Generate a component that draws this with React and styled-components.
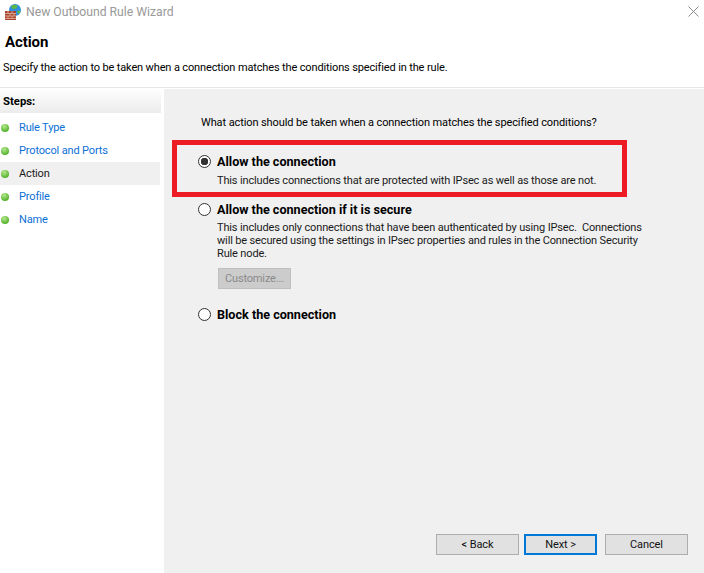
import React from 'react';
import styled, { createGlobalStyle } from 'styled-components';

const GlobalStyle = createGlobalStyle`
  html, body {
    margin: 0;
    padding: 0;
    background: #fff;
  }
  body {
    font-family: Roboto, "Open Sans", sans-serif;
    font-size: 11px;
    letter-spacing: -0.1px;
    color: #000;
  }
`;

const STEPS = [
  { label: 'Rule Type' },
  { label: 'Protocol and Ports' },
  { label: 'Action', current: true },
  { label: 'Profile' },
  { label: 'Name' },
];

function WizardIcon() {
  return (
    <svg width="16" height="18" viewBox="0 0 16 18">
      <circle cx="10" cy="7" r="6" fill="#2f8fe0" />
      <path d="M6.500 3c2-1.800 4.500-1.500 5.500-.5 1 2-1 3.500-3 3.500S5.500 5 6.500 3z" fill="#5cb848" />
      <path d="M12 8c2-.5 3.500 0 3.800 1L13 11z" fill="#5cb848" />
      <rect x="0" y="8" width="11" height="9" fill="#a8452f" />
      <path d="M0 10.500h11M0 13h11M0 15.500h11M3 8v2.500M7 8v2.500M5 10.500V13M9 10.500V13M3 13v2.500M7 13v2.500" stroke="#e3b7a5" strokeWidth="0.8" fill="none" />
    </svg>
  );
}

function CloseIcon() {
  return (
    <svg width="11" height="11" viewBox="0 0 11 11">
      <path d="M0.500 0.500l10 10M10.500 0.500l-10 10" stroke="#8a8a8a" strokeWidth="1" fill="none" />
    </svg>
  );
}

function RadioOption({ checked, title, tight, children }) {
  return (
    <Option>
      <RadioCircle $checked={checked} />
      <OptionBody>
        <OptionTitle>{title}</OptionTitle>
        {children && <OptionText $tight={tight}>{children}</OptionText>}
      </OptionBody>
    </Option>
  );
}

export default function App() {
  return (
    <Window>
      <GlobalStyle />
      <TitleBar>
        <WizardIcon />
        <TitleText>New Outbound Rule Wizard</TitleText>
        <CloseButton>
          <CloseIcon />
        </CloseButton>
      </TitleBar>
      <Header>
        <HeaderTitle>Action</HeaderTitle>
        <HeaderText>Specify the action to be taken when a connection matches the conditions specified in the rule.</HeaderText>
      </Header>
      <Body>
        <Sidebar>
          <StepsHeading>Steps:</StepsHeading>
          <StepList>
            {STEPS.map((step) => (
              <StepRow key={step.label} $current={step.current}>
                <StepDot />
                <StepLabel $current={step.current}>{step.label}</StepLabel>
              </StepRow>
            ))}
          </StepList>
        </Sidebar>
        <Main>
          <Question>What action should be taken when a connection matches the specified conditions?</Question>
          <Options>
            <RadioOption checked title="Allow the connection">
              This includes connections that are protected with IPsec as well as those are not.
            </RadioOption>
            <RadioOption tight title="Allow the connection if it is secure">
              This includes only connections that have been authenticated by using IPsec.&nbsp; Connections
              <br />
              will be secured using the settings in IPsec properties and rules in the Connection Security
              <br />
              Rule node.
              <CustomizeButton>Customize...</CustomizeButton>
            </RadioOption>
            <RadioOption title="Block the connection" />
          </Options>
          <Highlight />
          <Footer>
            <WizardButton>&lt; Back</WizardButton>
            <NextButton>Next &gt;</NextButton>
            <CancelButton>Cancel</CancelButton>
          </Footer>
        </Main>
      </Body>
    </Window>
  );
}

const Window = styled.div`
  width: 704px;
  height: 573px;
  display: flex;
  flex-direction: column;
  overflow: hidden;
  background: #fff;
`;

const TitleBar = styled.div`
  height: 24px;
  padding: 0 5px 0 5px;
  display: flex;
  align-items: center;
  gap: 5px;
  flex-shrink: 0;
`;

const TitleText = styled.div`
  color: #999;
  font-size: 12.2px;
  letter-spacing: 0;
`;

const CloseButton = styled.div`
  margin-left: auto;
  margin-bottom: 2px;
  display: flex;
`;

const Header = styled.div`
  height: 64px;
  padding: 10px 0 0 5px;
  box-sizing: border-box;
  flex-shrink: 0;
  border-bottom: 1px solid #e6e6e6;
`;

const HeaderTitle = styled.div`
  font-size: 15px;
  font-weight: 700;
  line-height: 16px;
`;

const HeaderText = styled.div`
  margin: 10px 0 0 -2px;
  line-height: 16px;
  letter-spacing: -0.14px;
`;

const Body = styled.div`
  flex: 1;
  display: flex;
  padding-top: 1px;
  min-height: 0;
`;

const Sidebar = styled.div`
  width: 161px;
  margin-right: 3px;
  padding-top: 1px;
  flex-shrink: 0;
`;

const StepsHeading = styled.div`
  height: 23px;
  line-height: 24px;
  padding-left: 3px;
  font-weight: 700;
  font-size: 11.3px;
  letter-spacing: 0;
  background: linear-gradient(#fdfdfd, #ececec);
`;

const StepList = styled.div`
  display: flex;
  flex-direction: column;
  padding-top: 3px;
`;

const StepRow = styled.div`
  height: 23px;
  width: 160px;
  display: flex;
  align-items: center;
  background: ${(p) => (p.$current ? '#f0f0f0' : 'transparent')};
`;

const StepDot = styled.span`
  width: 8px;
  height: 8px;
  margin-left: 1px;
  border-radius: 50%;
  background: radial-gradient(circle at 40% 30%, #b5e88f, #57b52f 70%);
`;

const StepLabel = styled.span`
  margin-left: 10px;
  letter-spacing: -0.15px;
  color: ${(p) => (p.$current ? '#1a1a1a' : '#0a6fd6')};
`;

const Main = styled.div`
  position: relative;
  flex: 1;
  background: #f0f0f0;
  padding: 26px 0 0 37px;
  display: flex;
  flex-direction: column;
  min-width: 0;
`;

const Question = styled.div`
  line-height: 16px;
`;

const Options = styled.div`
  margin-top: 23px;
  display: flex;
  flex-direction: column;
  gap: 15px;
`;

const Option = styled.div`
  display: flex;
  align-items: flex-start;
  gap: 6px;
  margin-left: -3px;
`;

const RadioCircle = styled.span`
  box-sizing: border-box;
  width: 13px;
  height: 13px;
  margin-top: 1px;
  border: 1px solid #333;
  border-radius: 50%;
  background: ${(p) => (p.$checked ? 'radial-gradient(circle, #333 0 3.5px, #fff 4px)' : '#fff')};
  flex-shrink: 0;
`;

const OptionBody = styled.div`
  display: flex;
  flex-direction: column;
`;

const OptionTitle = styled.div`
  font-weight: 700;
  font-size: 12.6px;
  letter-spacing: 0;
  line-height: 16px;
`;

const OptionText = styled.div`
  margin-top: ${(p) => (p.$tight ? '3px' : '4px')};
  line-height: 13px;
  color: #1a1a1a;
  letter-spacing: -0.15px;
`;

const CustomizeButton = styled.div`
  box-sizing: border-box;
  width: 73px;
  height: 21px;
  margin: 8px 0 3px 1px;
  border: 1px solid #bfbfbf;
  background: #ccc;
  color: #8a8a8a;
  display: flex;
  align-items: center;
  justify-content: center;
`;

const Highlight = styled.div`
  position: absolute;
  left: 8px;
  top: 51px;
  width: 455px;
  height: 57px;
  border: 5px solid #ed1c24;
  box-sizing: border-box;
  pointer-events: none;
`;

const Footer = styled.div`
  margin-top: auto;
  margin-left: 235px;
  padding-bottom: 18px;
  display: flex;
  gap: 5px;
`;

const WizardButton = styled.div`
  box-sizing: border-box;
  width: 83px;
  height: 21px;
  border: 1px solid #adadad;
  background: #e1e1e1;
  color: #111;
  display: flex;
  align-items: center;
  justify-content: center;
`;

const NextButton = styled(WizardButton)`
  width: 73px;
  border: 2px solid #0078d7;
`;

const CancelButton = styled(WizardButton)`
  width: 83px;
  margin-left: 3px;
`;
